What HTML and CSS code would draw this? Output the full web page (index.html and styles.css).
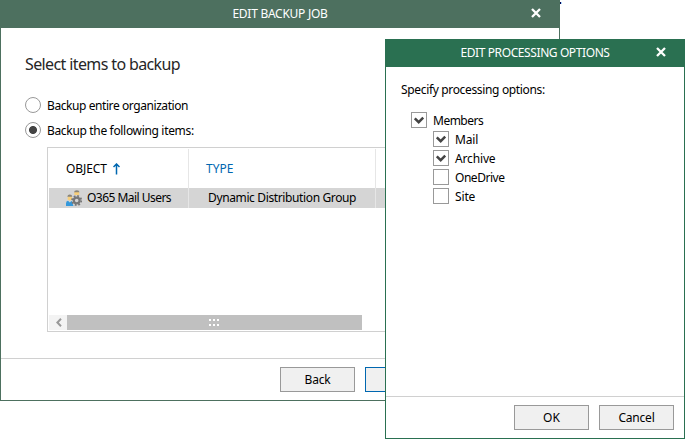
FILE: index.html
```
<!DOCTYPE html>
<html lang="en">
<head>
<meta charset="utf-8">
<title>Edit Backup Job</title>
<link rel="stylesheet" href="styles.css">
</head>
<body>
<i class="speck"></i>
<main class="window">
  <header class="titlebar"><span class="t-job">EDIT BACKUP JOB</span>
    <svg class="close" width="10" height="10" viewBox="0 0 10 10"><path d="M1 1L9 9M9 1L1 9"/></svg></header>
  <section class="content">
    <h1><span class="t-head">Select items to backup</span></h1>
    <label class="option"><i class="radio"></i><span class="t-entire">Backup entire organization</span></label>
    <label class="option"><i class="radio selected"></i><span class="t-follow">Backup the following items:</span></label>
    <div class="table">
      <div class="row head">
        <div class="cell"><span class="t-object">OBJECT</span><svg class="sort" width="7" height="12" viewBox="0 0 7 12"><path d="M3.5 1V11.5M.5 4L3.5 1L6.5 4"/></svg></div>
        <div class="cell type"><span class="t-type">TYPE</span></div>
        <div class="cell"></div>
      </div>
      <div class="row item">
        <div class="cell">
          <svg class="users" width="16" height="16" viewBox="0 0 16 16">
            <path fill="#f7cf7b" d="M8.3 2h4.9v3H8.3z"/><path fill="#8a8578" d="M8 2.2Q8.2.3 10.8.3T13.500 2.200z"/>
            <path fill="#f7cf7b" d="M1.700 6.500h4.300v3q-2.100 2-4.300 0z"/><path fill="#8a8578" d="M1.300 6.700Q1.500 4.500 3.800 4.500T6.300 6.700z"/>
            <path fill="#3498db" d="M0 16v-2.500q0-2.500 2-2.700l1.800 1.700 1.800-1.700L7.500 16z"/>
            <circle cx="10.700" cy="10.500" r="4.600" fill="none" stroke="#777" stroke-width="1.800" stroke-dasharray="1.800 1.810"/>
            <circle cx="10.700" cy="10.500" r="2.900" fill="#d5d5d5" stroke="#777" stroke-width="2.200"/>
          </svg><span class="t-users">O365 Mail Users</span></div>
        <div class="cell group"><span class="t-group">Dynamic Distribution Group</span></div>
        <div class="cell"></div>
      </div>
      <div class="scrollbar">
        <div class="arrow"><svg width="6" height="9" viewBox="0 0 6 9"><path d="M5 .8L1.4 4.500L5 8.200"/></svg></div>
        <div class="thumb"><i></i><i></i><i></i><i></i><i></i><i></i></div>
      </div>
    </div>
  </section>
  <footer class="footer"><button><span class="t-back">Back</span></button><button class="primary"></button></footer>
</main>
<aside class="window dialog">
  <header class="titlebar"><span class="t-proc">EDIT PROCESSING OPTIONS</span>
    <svg class="close" width="10" height="10" viewBox="0 0 10 10"><path d="M1 1L9 9M9 1L1 9"/></svg></header>
  <section class="content">
    <p><span class="t-specify">Specify processing options:</span></p>
    <div class="tree">
      <label><i class="check"><svg viewBox="0 0 14 14"><path d="M2.800 5.300L6.700 9.200L11.200 4.700"/></svg></i><span class="t-members">Members</span></label>
      <div class="children">
        <label><i class="check"><svg viewBox="0 0 14 14"><path d="M2.800 5.300L6.700 9.200L11.200 4.700"/></svg></i><span class="t-mail">Mail</span></label>
        <label><i class="check"><svg viewBox="0 0 14 14"><path d="M2.800 5.300L6.700 9.200L11.200 4.700"/></svg></i><span class="t-archive">Archive</span></label>
        <label><i class="check"></i><span class="t-one">OneDrive</span></label>
        <label><i class="check"></i><span class="t-site">Site</span></label>
      </div>
    </div>
  </section>
  <footer class="footer"><button><span class="t-ok">OK</span></button><button><span class="t-cancel">Cancel</span></button></footer>
</aside>
</body>
</html>
```
FILE: styles.css
```
* { box-sizing: border-box; }
body { margin: 0; background: #fff; color: #000; font: 12px/16px "Noto Sans", "Open Sans", sans-serif; overflow: hidden; }
.window { display: flex; flex-direction: column; width: 560px; height: 401px; border: 1px solid #4d705f; background: #fff; overflow: hidden; }
.speck { position: absolute; left: 560px; top: 2px; width: 2px; height: 2px; background: linear-gradient(90deg, #000050 50%, #a8d8ff 50%); }
.titlebar { position: relative; display: flex; flex: none; align-items: center; justify-content: center; height: 27px; padding-bottom: 1px; background: #4d705f; color: #fff; }
.close { position: absolute; right: 18px; top: 7px; }
.close path { fill: none; stroke: #fff; stroke-width: 2.3; }
.content { flex: 1; padding: 26px 0 0 24px; }
h1 { margin: 0 0 23px; font-size: 16px; line-height: 20px; font-weight: 400; color: #262626; }
.option { display: flex; align-items: center; height: 16px; margin-bottom: 9px; }
.option span, .tree span { padding-top: 2px; }
.radio { width: 16px; height: 16px; margin-right: 6px; border: 1px solid #999; border-radius: 50%; }
.radio.selected { background: radial-gradient(circle, #444 3.6px, #fff 4.4px); }
.table { display: flex; flex-direction: column; width: 600px; height: 185px; margin-left: 22px; padding: 1px; border: 1px solid #d0d0d0; }
.row { display: flex; flex: none; }
.head { height: 39px; }
.item { height: 20px; background: #d5d5d5; }
.cell { display: flex; align-items: center; flex: none; width: 140px; padding-left: 17px; border-right: 1px solid #e6e6e6; }
.cell.type, .cell.group { width: 187px; }
.type { color: #0067b0; }
.cell.group { padding-left: 19px; }
.sort { margin-left: 6px; fill: none; stroke: #0067b0; stroke-width: 1.5; }
.users { margin-right: 5px; }
.scrollbar { display: flex; margin-top: auto; height: 15px; }
.arrow { display: flex; align-items: center; justify-content: center; width: 18px; padding-left: 1px; background: #f3f3f3; }
.arrow svg { fill: none; stroke: #999; stroke-width: 2; }
.thumb { display: grid; grid-template-columns: repeat(3, 2px); grid-auto-rows: 2px; gap: 3px 2px; justify-content: center; align-content: center; width: 295px; padding-right: 1px; background: #c0c0c0; }
.thumb i { background: #fff; }
.footer { display: flex; flex: none; gap: 10px; height: 42px; padding: 8px 0 0 279px; border-top: 1px solid #d0d0d0; }
button { display: flex; align-items: center; justify-content: center; width: 75px; height: 25px; padding: 0; border: 1px solid #999; background: #f0f0f0; color: #000; font: inherit; }
.primary { border-color: #0067b0; }
.dialog { position: absolute; left: 385px; top: 39px; width: 300px; height: 400px; border-color: #2a7051; }
.dialog .titlebar { background: #2a7051; }
.dialog .content { padding: 15px 0 0 15px; }
.dialog p { margin: 0; }
.tree { padding: 14px 0 0 10px; }
.tree label { display: flex; align-items: center; height: 16px; margin-bottom: 3px; }
.children { padding-left: 22px; }
.check { display: flex; width: 16px; height: 16px; margin-right: 6px; border: 1px solid #999; }
.check path { fill: none; stroke: #444; stroke-width: 2.5; }
.dialog .footer { justify-content: flex-end; padding: 8px 10px 0 0; }
.t-job { letter-spacing: -.27px; }
.t-head { letter-spacing: -.62px; }
.t-entire { letter-spacing: -.42px; }
.t-follow { letter-spacing: -.33px; }
.t-object { letter-spacing: -.1px; }
.t-users { letter-spacing: -.53px; }
.t-group { letter-spacing: -.37px; }
.t-proc { letter-spacing: -.4px; }
.t-specify { letter-spacing: -.34px; }
.t-members { letter-spacing: -.5px; }
.t-mail, .t-archive, .t-site { letter-spacing: -.15px; }
.t-one { letter-spacing: -.46px; }
.t-back, .t-cancel { letter-spacing: -.2px; }
```
